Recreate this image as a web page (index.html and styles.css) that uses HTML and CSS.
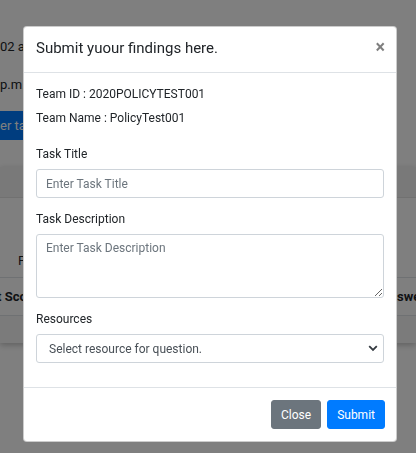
FILE: index.html
```html
<!DOCTYPE html>
<html lang="en">
<head>
<meta charset="utf-8">
<title>Submit findings</title>
<link rel="stylesheet" href="styles.css">
</head>
<body>
<div class="page">
  <div class="times">
    <p class="time first">02 a.m.</p>
    <p class="time">p.m.</p>
  </div>
  <div class="enter">er task</div>
  <div class="card">
    <div class="card-head"></div>
    <div class="thead"><span class="th">P</span></div>
    <div class="trow">
      <span class="td left">t Score</span>
      <span class="td"></span>
      <span class="td">swer</span>
    </div>
    <div class="card-foot"></div>
  </div>
</div>
<div class="backdrop"></div>
<div class="modal">
  <div class="modal-header">
    <h5 class="modal-title">Submit yuour findings here.</h5>
    <button class="close" type="button">&times;</button>
  </div>
  <div class="modal-body">
    <div class="group">
      <div class="info">Team ID : 2020POLICYTEST001</div>
      <div class="info">Team Name : PolicyTest001</div>
    </div>
    <div class="group">
      <label class="label">Task Title</label>
      <input class="control" type="text" placeholder="Enter Task Title">
    </div>
    <div class="group">
      <label class="label">Task Description</label>
      <textarea class="control area" placeholder="Enter Task Description"></textarea>
    </div>
    <div class="group">
      <label class="label">Resources</label>
      <select class="control select">
        <option>Select resource for question.</option>
      </select>
    </div>
  </div>
  <div class="modal-footer">
    <button class="btn btn-close" type="button">Close</button>
    <button class="btn btn-submit" type="button">Submit</button>
  </div>
</div>
</body>
</html>
```
FILE: styles.css
```css
html, body {
  margin: 0;
  padding: 0;
}
body {
  font-family: Roboto, "Liberation Sans", sans-serif;
  font-size: 12px;
  line-height: 18px;
  color: #212529;
  background: #fff;
  width: 416px;
  height: 453px;
  overflow: hidden;
}
.page {
  display: flex;
  flex-direction: column;
}
.times {
  display: flex;
  flex-direction: column;
  gap: 18px;
  padding-top: 37px;
  width: 23px;
  overflow: hidden;
}
.time {
  margin: 0;
  font-size: 13px;
  line-height: 20px;
  white-space: nowrap;
}
.enter {
  margin-top: 16px;
  height: 29px;
  width: 23px;
  overflow: hidden;
  background: #007bff;
  color: #fff;
  font-size: 13px;
  line-height: 29px;
  white-space: nowrap;
}
.card {
  margin-top: 27px;
  background: #fff;
  box-shadow: 0 2px 6px rgba(0,0,0,.25);
  display: flex;
  flex-direction: column;
}
.card-head {
  height: 30px;
  background: #f3f3f3;
  border-bottom: 1px solid #e2e2e2;
}
.thead {
  height: 79px;
  display: flex;
  align-items: flex-end;
  border-bottom: 1px solid #dee2e6;
}
.th {
  padding: 0 0 6px 18px;
  font-size: 13px;
  line-height: 20px;
}
.trow {
  height: 37px;
  display: grid;
  grid-template-columns: 23px 374px 19px;
  align-items: center;
  border-bottom: 1px solid #dee2e6;
  font-weight: 700;
  font-size: 13px;
  white-space: nowrap;
}
.td {
  overflow: hidden;
}
.td.left {
  text-indent: -3px;
}
.card-foot {
  height: 27px;
  background: #f7f7f7;
}
.backdrop {
  position: fixed;
  inset: 0;
  background: rgba(0,0,0,.5);
}
.modal {
  position: absolute;
  left: 23px;
  top: 26px;
  width: 374px;
  box-sizing: border-box;
  background: #fff;
  border: 1px solid rgba(0,0,0,.2);
  border-radius: 4px;
}
.modal-header {
  display: flex;
  align-items: flex-start;
  justify-content: space-between;
  padding: 11px 12px 13px;
  border-bottom: 1px solid #dee2e6;
}
.modal-title {
  margin: 0;
  font-size: 15px;
  line-height: 21px;
  font-weight: 400;
}
.close {
  margin: 0;
  padding: 0;
  border: 0;
  background: none;
  font-family: Roboto, "Liberation Sans", sans-serif;
  font-size: 18px;
  line-height: 18px;
  font-weight: 700;
  color: #000;
  opacity: .5;
  margin-right: -1px;
}
.modal-body {
  padding: 12px;
}
.group {
  display: flex;
  flex-direction: column;
  margin-bottom: 12px;
}
.info {
  margin-bottom: 6px;
}
.label {
  display: block;
  margin-bottom: 6px;
}
.control {
  display: block;
  box-sizing: border-box;
  width: 100%;
  height: 29px;
  margin: 0;
  padding: 4px 9px;
  border: 1px solid #ced4da;
  border-radius: 3px;
  font-family: Roboto, "Liberation Sans", sans-serif;
  font-size: 12px;
  line-height: 18px;
  color: #495057;
  background: #fff;
}
.control::placeholder {
  color: #6c757d;
  opacity: 1;
}
.area {
  height: 64px;
  resize: vertical;
}
.select {
  appearance: none;
  -webkit-appearance: none;
  padding-left: 12px;
  background: #fff url("data:image/svg+xml,%3Csvg xmlns='http://www.w3.org/2000/svg' width='10' height='7' viewBox='0 0 10 7'%3E%3Cpath d='M1.2 1.2L5 5l3.8-3.8' fill='none' stroke='%23343a40' stroke-width='1.8'/%3E%3C/svg%3E") no-repeat right 5px center / 10px 7px;
}
.modal-footer {
  display: flex;
  justify-content: flex-end;
  align-items: center;
  padding: 9px 8px 9px 9px;
  border-top: 1px solid #dee2e6;
}
.btn {
  margin: 3px;
  height: 29px;
  padding: 0 9px;
  border: 1px solid transparent;
  border-radius: 3px;
  font-family: Roboto, "Liberation Sans", sans-serif;
  font-size: 12px;
  line-height: 18px;
  color: #fff;
}
.btn-close {
  background: #6c757d;
  border-color: #6c757d;
}
.btn-submit {
  background: #007bff;
  border-color: #007bff;
}
```
